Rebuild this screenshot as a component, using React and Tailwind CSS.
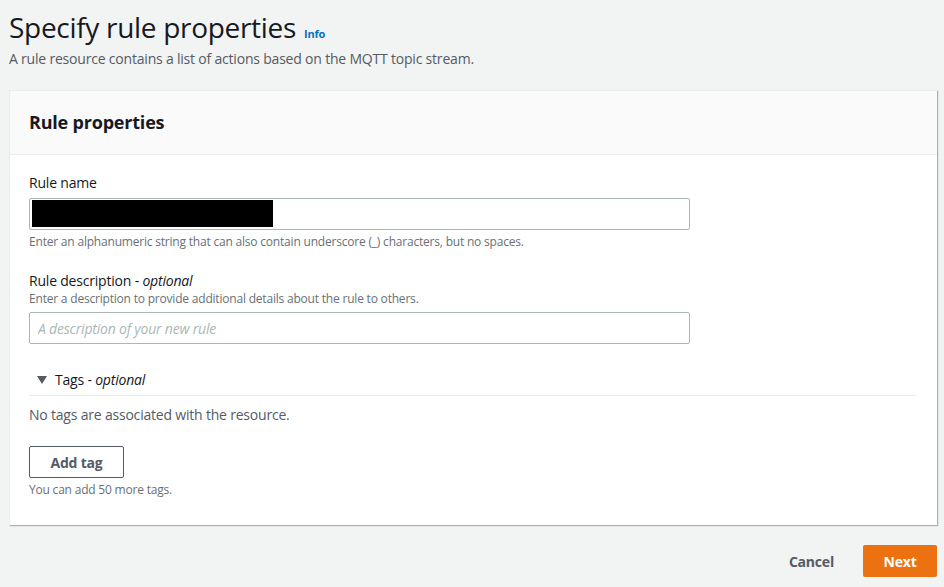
export default function App() {
  return (
    <div className="min-h-[587px] w-full bg-[#f2f3f3] text-[#16191f] font-['Open_Sans',sans-serif] tracking-[-0.2px]">
      <div className="pl-[9px] pr-[7px] pt-[10px]">
        <div className="flex items-baseline gap-[8px]">
          <h1 className="text-[28px] leading-[34px] font-normal tracking-[-0.3px]">Specify rule properties</h1>
          <span className="text-[11px] font-bold text-[#0073bb]">Info</span>
        </div>
        <p className="mt-[5px] text-[14px] leading-[20px] text-[#545b64]">
          A rule resource contains a list of actions based on the MQTT topic stream.
        </p>

        <div className="mt-[21px] bg-white border-t border-l border-[#eaeded] shadow-[1px_1px_1px_0_rgba(0,28,36,0.3)]">
          <div className="h-[64px] bg-[#fafafa] border-b border-[#eaeded] px-[19px] flex items-center">
            <h2 className="text-[18px] font-bold">Rule properties</h2>
          </div>

          <div className="pl-[19px] pr-[21px] pt-[18px] pb-[27px]">
            <label className="block text-[14px] leading-[20px]">Rule name</label>
            <div className="mt-[5px] w-[661px] h-[32px] border border-[#aab7b8] rounded-[2px] relative">
              <div className="absolute left-[2px] top-[1px] w-[241px] h-[27px] bg-black" />
            </div>
            <p className="mt-[4px] text-[12px] leading-[16px] text-[#687078]">
              Enter an alphanumeric string that can also contain underscore (_) characters, but no spaces.
            </p>

            <label className="mt-[21px] block text-[14px] leading-[20px]">
              Rule description - <i>optional</i>
            </label>
            <p className="text-[12px] leading-[16px] text-[#687078]">
              Enter a description to provide additional details about the rule to others.
            </p>
            <input
              type="text"
              placeholder="A description of your new rule"
              className="mt-[5px] block w-[661px] h-[32px] border border-[#aab7b8] rounded-[2px] px-[8px] text-[14px] italic placeholder:text-[#aab7b8] outline-none"
            />

            <div className="mt-[26px] flex items-center gap-[6px] pl-[8px] pb-[5px] border-b border-[#eaeded]">
              <svg width="10" height="8" viewBox="0 0 10 8" className="text-[#545b64]">
                <path d="M0 0 L10 0 L5 8 Z" fill="currentColor" />
              </svg>
              <span className="text-[14px] leading-[20px] ml-[2px]">
                Tags - <i>optional</i>
              </span>
            </div>

            <p className="mt-[9px] text-[14px] leading-[20px] text-[#545b64]">No tags are associated with the resource.</p>

            <button className="mt-[21px] w-[95px] h-[32px] border border-[#545b64] rounded-[2px] text-[14px] font-bold text-[#545b64]">
              Add tag
            </button>
            <p className="mt-[4px] text-[12px] leading-[16px] text-[#687078]">You can add 50 more tags.</p>
          </div>
        </div>

        <div className="mt-[20px] flex justify-end items-center gap-[29px]">
          <button className="text-[14px] font-bold text-[#545b64]">Cancel</button>
          <button className="w-[74px] h-[32px] bg-[#ec7211] rounded-[2px] text-[14px] font-bold text-white">
            Next
          </button>
        </div>
      </div>
    </div>
  )
}
